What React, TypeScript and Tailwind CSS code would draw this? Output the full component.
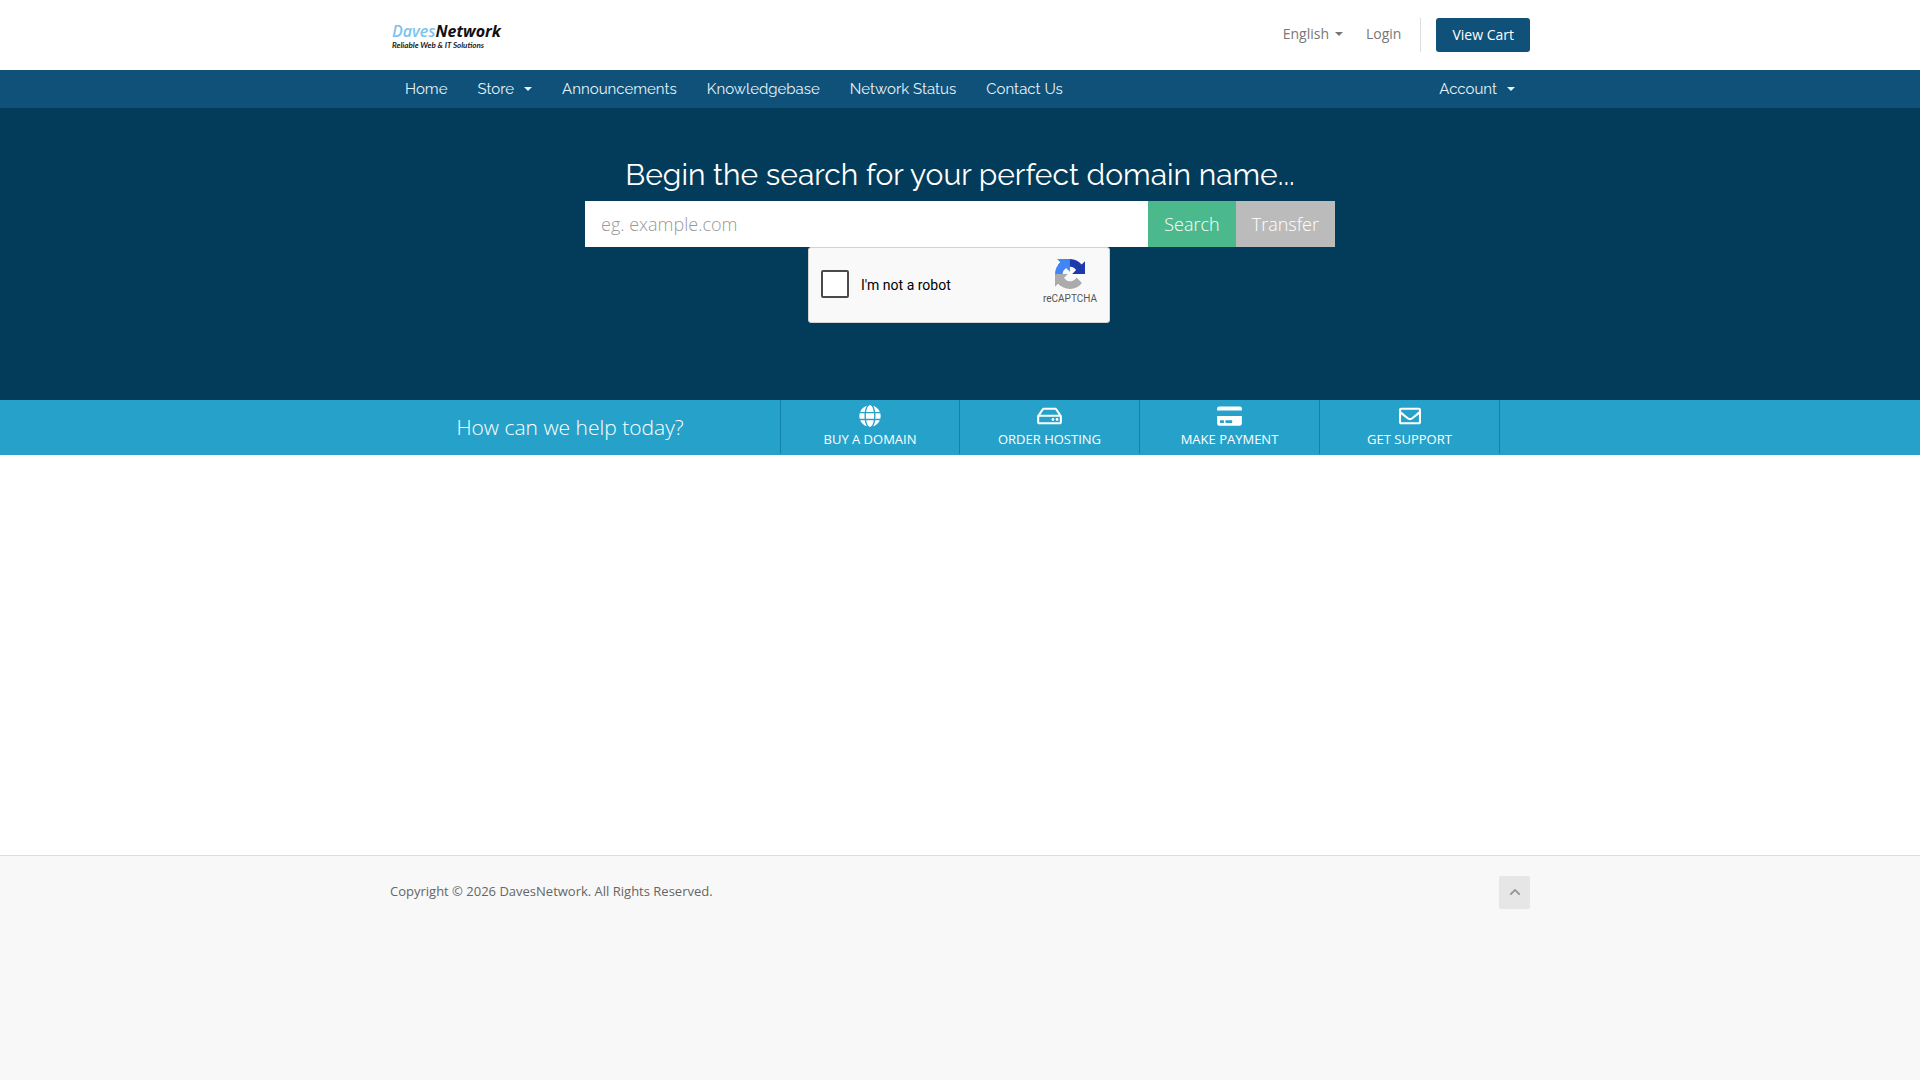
import React from 'react';
import { FaGlobe, FaRegHdd, FaCreditCard, FaRegEnvelope, FaChevronUp } from 'react-icons/fa';

const navItems = [
  { label: 'Home', caret: false },
  { label: 'Store', caret: true },
  { label: 'Announcements', caret: false },
  { label: 'Knowledgebase', caret: false },
  { label: 'Network Status', caret: false },
  { label: 'Contact Us', caret: false },
];

const shortcuts = [
  { label: 'Buy A Domain', Icon: FaGlobe, size: 'w-[22px]' },
  { label: 'Order Hosting', Icon: FaRegHdd, size: 'w-[25px]' },
  { label: 'Make Payment', Icon: FaCreditCard, size: 'w-[25px]' },
  { label: 'Get Support', Icon: FaRegEnvelope, size: 'w-[22px]' },
];

function Caret() {
  return <span className="inline-block border-x-4 border-t-4 border-x-transparent border-t-current" />;
}

function Logo() {
  return (
    <a href="#" aria-label="DavesNetwork" className="block pt-1 italic">
      <span className="block text-base leading-4 font-semibold text-[#7cc4ef]">
        Daves<span className="font-bold text-[#111]">Network</span>
      </span>
      <span className="block font-['Lato',sans-serif] text-[8px] leading-3 font-bold text-[#222]">
        Reliable Web &amp; IT Solutions
      </span>
    </a>
  );
}

function Header() {
  return (
    <header className="mx-auto flex h-[70px] w-full max-w-[1140px] items-center justify-between">
      <div className="pl-0.5">
        <Logo />
      </div>
      <div className="flex h-[34px] items-stretch text-sm text-[#777]">
        <button type="button" className="flex items-center gap-1.5 pr-[23px] pb-0.5">
          English <Caret />
        </button>
        <a href="#" className="flex items-center border-r border-[#ddd] pr-[19px] pb-0.5">
          Login
        </a>
        <a href="#" className="ml-[15px] flex items-center rounded-[3px] bg-[#0f5178] px-4 text-white">
          View Cart
        </a>
      </div>
    </header>
  );
}

function NavBar() {
  return (
    <nav className="bg-[#0f5178] font-['Raleway',sans-serif] text-[15px] text-[#e6f3fb]">
      <div className="mx-auto flex h-[38px] max-w-[1140px] items-center">
        {navItems.map((item) => (
          <a key={item.label} href="#" className="flex items-center gap-[10px] px-[15px]">
            {item.label}
            {item.caret && <Caret />}
          </a>
        ))}
        <button type="button" className="ml-auto flex items-center gap-[10px] px-[15px]">
          Account <Caret />
        </button>
      </div>
    </nav>
  );
}

function Recaptcha() {
  return (
    <div className="mx-auto w-[304px]">
      <div className="flex h-[76px] w-[302px] items-center rounded-[3px] border border-[#d3d3d3] bg-[#f9f9f9] pl-3 font-['Roboto',sans-serif]">
        <input
          id="not-robot"
          type="checkbox"
          className="mb-0.5 h-7 w-7 appearance-none rounded-[2px] border-2 border-[#4a4a4a] bg-white"
        />
        <label htmlFor="not-robot" className="ml-3 text-sm text-black">
          I'm not a robot
        </label>
        <div className="mr-3 mb-1.5 ml-auto flex flex-col items-center">
          <svg viewBox="0 0 64 64" className="h-[30px] w-[30px]">
            <path
              fill="#1c3aa9"
              d="M64 31.955l-.033-1.37V4.687l-7.16 7.16C50.948 4.674 42.033.093 32.05.093c-10.4 0-19.622 4.96-25.458 12.64l11.736 11.86a15.55 15.55 0 0 1 4.754-5.334c2.05-1.6 4.952-2.906 8.968-2.906.485 0 .86.057 1.135.163 4.976.393 9.288 3.14 11.828 7.124l-8.307 8.307L64 31.953"
            />
            <path
              fill="#4285f4"
              d="M31.862.094l-1.37.033H4.594l7.16 7.16C4.58 13.147 0 22.06 0 32.046c0 10.4 4.96 19.622 12.64 25.458L24.5 45.768a15.55 15.55 0 0 1-5.334-4.754c-1.6-2.05-2.906-4.952-2.906-8.968 0-.485.057-.86.163-1.135.393-4.976 3.14-9.288 7.124-11.828l8.307 8.307L31.86.095"
            />
            <path
              fill="#ababab"
              d="M.001 32.045l.033 1.37v25.898l7.16-7.16c5.86 7.173 14.774 11.754 24.76 11.754 10.4 0 19.622-4.96 25.458-12.64l-11.736-11.86a15.55 15.55 0 0 1-4.754 5.334c-2.05 1.6-4.952 2.906-8.968 2.906-.485 0-.86-.057-1.135-.163-4.976-.393-9.288-3.14-11.828-7.124l8.307-8.307c-10.522.04-22.4.066-27.295-.005"
            />
          </svg>
          <span className="mt-1 text-[10px] leading-3 text-[#555]">reCAPTCHA</span>
        </div>
      </div>
    </div>
  );
}

function DomainSearch() {
  return (
    <section className="bg-[#033c5a] pt-[49px] pb-[77px]">
      <h2 className="mb-2 text-center font-['Raleway',sans-serif] text-3xl leading-9 text-white">
        Begin the search for your perfect domain name...
      </h2>
      <form className="mx-auto max-w-[750px]" onSubmit={(e) => e.preventDefault()}>
        <div className="flex h-[46px] text-lg font-light">
          <input
            type="text"
            aria-label="Domain name"
            placeholder="eg. example.com"
            className="min-w-0 flex-1 bg-white px-4 text-[#555] outline-none placeholder:text-[#999]"
          />
          <button type="submit" className="bg-[#4bb98c] px-4 text-white">
            Search
          </button>
          <button type="button" className="bg-[#bbb] px-4 text-white">
            Transfer
          </button>
        </div>
        <Recaptcha />
      </form>
    </section>
  );
}

function Shortcuts() {
  return (
    <section className="bg-[#26a2ca] text-white">
      <div className="mx-auto flex h-[55px] max-w-[1140px]">
        <p className="flex w-[390px] items-center justify-center pr-[30px] text-[21px] font-light">
          How can we help today?
        </p>
        <ul className="mb-px flex">
          {shortcuts.map(({ label, Icon, size }) => (
            <li key={label} className="w-[180px] border-r border-[#0f83aa] first:border-l">
              <a href="#" className="flex flex-col items-center pt-[5px] text-[13px] leading-6 uppercase">
                <Icon className={`h-[22px] ${size}`} />
                {label}
              </a>
            </li>
          ))}
        </ul>
      </div>
    </section>
  );
}

function Footer() {
  return (
    <footer className="flex-1 border-t border-[#ddd] bg-[#f8f8f8] pt-5">
      <div className="mx-auto flex max-w-[1140px] items-center justify-between">
        <p className="pb-0.5 text-[13px] text-[#666]">Copyright © 2026 DavesNetwork. All Rights Reserved.</p>
        <a
          href="#"
          aria-label="Back to top"
          className="flex h-[33px] w-[31px] items-center justify-center rounded-[2px] bg-[#e6e6e6] pb-0.5 text-[#999]"
        >
          <FaChevronUp className="h-3 w-3" />
        </a>
      </div>
    </footer>
  );
}

export default function App() {
  return (
    <div className="flex min-h-screen flex-col bg-white font-['Open_Sans',sans-serif]">
      <Header />
      <NavBar />
      <DomainSearch />
      <Shortcuts />
      <main className="min-h-[400px]" />
      <Footer />
    </div>
  );
}
